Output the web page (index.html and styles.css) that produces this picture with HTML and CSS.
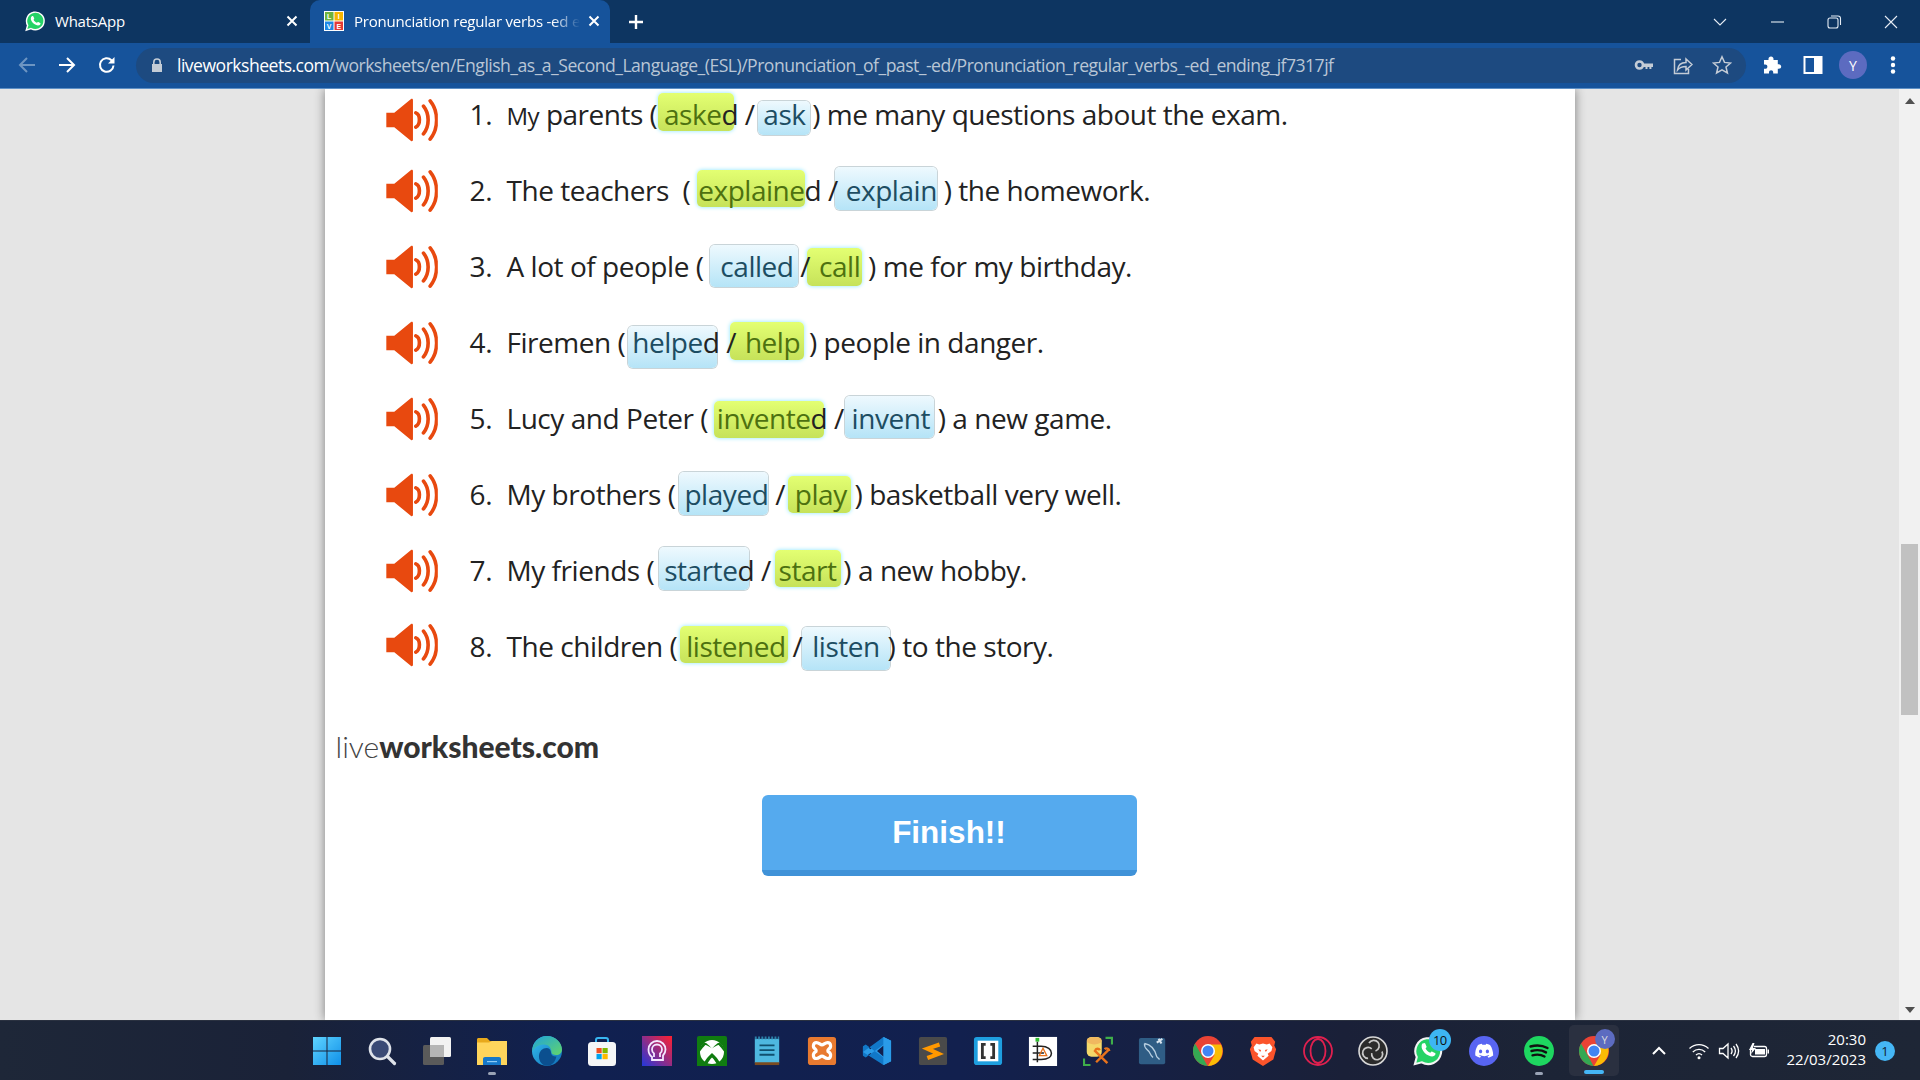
FILE: index.html
```html
<!DOCTYPE html>
<html lang="en">
<head>
<meta charset="utf-8">
<title>Pronunciation regular verbs -ed ending</title>
<link rel="stylesheet" href="styles.css">
</head>
<body>
<header class="titlebar">
  <div class="tab">
    <svg class="fav" viewBox="0 0 24 24"><path fill="#25d366" stroke="#fff" stroke-width="1.6" d="M2.5 22l1.5-5.3A9.6 9.6 0 1 1 7.6 20.3z"/><path fill="#fff" d="M8.6 6.8c.6-.5 1.3-.4 1.6.2l.9 2c.2.4 0 .8-.7 1.6.7 1.5 2 2.7 3.6 3.4.8-.9 1.2-1.1 1.6-.9l2 1c.5.3.6.9.2 1.5-1 1.6-2.8 1.6-5 .6-2.300-1-4-2.800-5-5-.6-1.700-.5-3.300.8-4.400z"/></svg>
    <span class="tab-title">WhatsApp</span>
    <svg class="tab-x" viewBox="0 0 12 12"><path d="M1.500 1.500l9 9M10.500 1.500l-9 9"/></svg>
  </div>
  <div class="tab active">
    <svg class="fav live" viewBox="0 0 20 20"><rect width="20" height="20" fill="#fff"/><rect x="1" y="1" width="8.500" height="8.500" fill="#6db33f"/><rect x="10.500" y="1" width="8.500" height="8.500" fill="#f7b500"/><rect x="1" y="10.500" width="8.500" height="8.500" fill="#1e88e5"/><rect x="10.500" y="10.500" width="8.500" height="8.500" fill="#e53935"/><text x="5.200" y="8.200" text-anchor="middle">L</text><text x="14.800" y="8.200" text-anchor="middle">I</text><text x="5.200" y="17.600" text-anchor="middle">V</text><text x="14.800" y="17.600" text-anchor="middle">E</text></svg>
    <span class="tab-title fade">Pronunciation regular verbs -ed e</span>
    <svg class="tab-x" viewBox="0 0 12 12"><path d="M1.500 1.500l9 9M10.500 1.500l-9 9"/></svg>
  </div>
  <svg class="newtab" viewBox="0 0 16 16"><path d="M8 1v14M1 8h14"/></svg>
  <div class="winctl">
    <svg class="wc" viewBox="0 0 16 16"><path d="M2 5l6 6 6-6"/></svg>
    <svg class="wc" viewBox="0 0 16 16"><path d="M2 8h13"/></svg>
    <svg class="wc" viewBox="0 0 16 16"><rect x="2" y="4" width="10" height="10" rx="2"/><path d="M5 2h7a2.500 2.500 0 0 1 2.500 2.500V11"/></svg>
    <svg class="wc" viewBox="0 0 16 16"><path d="M2 2l12 12M14 2L2 14"/></svg>
  </div>
</header>
<nav class="toolbar">
  <svg class="nav dim" viewBox="0 0 20 20"><path d="M18 10H3M10 3l-7 7 7 7"/></svg>
  <svg class="nav" viewBox="0 0 20 20"><path d="M2 10h15M10 3l7 7-7 7"/></svg>
  <svg class="nav" viewBox="0 0 20 20"><path d="M16.500 10.500a6.800 6.800 0 1 1-2-5.300L16.500 7"/><path class="solid" d="M17.500 2v6.500H11z"/></svg>
  <div class="omnibox">
    <svg class="lock" viewBox="0 0 12 14"><path d="M2 6V4.200a4 4 0 0 1 8 0V6h1v8H1V6zm1.600 0h4.800V4.200a2.400 2.400 0 0 0-4.800 0z"/></svg>
    <div class="url"><b>liveworksheets.com</b>/worksheets/en/English_as_a_Second_Language_(ESL)/Pronunciation_of_past_-ed/Pronunciation_regular_verbs_-ed_ending_jf7317jf</div>
    <svg class="omni-ic" viewBox="0 0 20 20"><circle cx="5.500" cy="10" r="3.500" fill="none" stroke="#c4ccd6" stroke-width="2.600"/><path fill="#c4ccd6" d="M8 8.500h11v3.500h-1.600v2h-2v-2H13.500v2h-2v-2H8z"/></svg>
    <svg class="omni-ic line" viewBox="0 0 20 20"><path d="M8 4.500H1.500v14h14V14M4.500 15c.5-5 4-7.500 8.500-7.500V4l6 5.500-6 5.500v-3.500c-3.500 0-6.500 1-8.500 3.500z"/></svg>
    <svg class="omni-ic line" viewBox="0 0 20 20"><path stroke-width="1.800" d="M10 1.800l2.500 5.600 6.100.6-4.600 4 1.400 6-5.400-3.200-5.400 3.200 1.400-6-4.600-4 6.100-.6z"/></svg>
  </div>
  <div class="tool-right">
    <svg class="tool" viewBox="0 0 20 20"><path fill="#fff" d="M8 1.500c1.500 0 2.500 1 2.500 2.300V5h4.300v4.200h1c1.400 0 2.400 1 2.400 2.300s-1 2.300-2.400 2.300h-1v4.700h-4.600v-1.200c0-1.200-.9-2-2.100-2s-2.100.8-2.100 2v1.200H1V13.800h1.200c1.300 0 2.200-.9 2.200-2.100S3.500 9.600 2.200 9.600H1V5h4.500V3.800C5.500 2.500 6.500 1.500 8 1.500z"/></svg>
    <svg class="tool" viewBox="0 0 20 20"><rect x="1.500" y="2" width="17" height="16" fill="none" stroke="#fff" stroke-width="2"/><rect x="11" y="2" width="8" height="16" fill="#fff"/></svg>
    <div class="avatar">Y</div>
    <svg class="tool" viewBox="0 0 20 20"><circle cx="10" cy="3.500" r="2.200" fill="#fff"/><circle cx="10" cy="10" r="2.200" fill="#fff"/><circle cx="10" cy="16.500" r="2.200" fill="#fff"/></svg>
  </div>
</nav>
<div class="viewport">
  <main class="page">
    <section class="sheet">
      <ol class="list">
        <li class="row r1"><svg class="spk" viewBox="0 0 54 46"><use href="#speaker"/></svg><span class="num">1.</span><p class="sentence"><span class="my">My</span> parents ( <span class="chip g c-asked">aske</span>d <span class="sl">/</span> <span class="chip b c-ask">ask</span> ) me many questions about the exam.</p></li>
        <li class="row r2"><svg class="spk" viewBox="0 0 54 46"><use href="#speaker"/></svg><span class="num">2.</span><p class="sentence">The teachers &nbsp;( <span class="chip g c-explained">explaine</span>d <span class="sl">/</span> <span class="chip b c-explain">explain</span> ) the homework.</p></li>
        <li class="row r3"><svg class="spk" viewBox="0 0 54 46"><use href="#speaker"/></svg><span class="num">3.</span><p class="sentence">A lot of people ( <span class="chip b c-called">called</span> <span class="sl">/</span> <span class="chip g c-call">call</span> ) me for my birthday.</p></li>
        <li class="row r4"><svg class="spk" viewBox="0 0 54 46"><use href="#speaker"/></svg><span class="num">4.</span><p class="sentence">Firemen ( <span class="chip b c-helped">helpe</span>d <span class="sl">/</span> <span class="chip g c-help">help</span> ) people in danger.</p></li>
        <li class="row r5"><svg class="spk" viewBox="0 0 54 46"><use href="#speaker"/></svg><span class="num">5.</span><p class="sentence">Lucy and Peter ( <span class="chip g c-invented">invente</span>d <span class="sl">/</span> <span class="chip b c-invent">invent</span> ) a new game.</p></li>
        <li class="row r6"><svg class="spk" viewBox="0 0 54 46"><use href="#speaker"/></svg><span class="num">6.</span><p class="sentence">My brothers ( <span class="chip b c-played">played</span> <span class="sl">/</span> <span class="chip g c-play">play</span> ) basketball very well.</p></li>
        <li class="row r7"><svg class="spk" viewBox="0 0 54 46"><use href="#speaker"/></svg><span class="num">7.</span><p class="sentence">My friends ( <span class="chip b c-started">starte</span>d <span class="sl">/</span> <span class="chip g c-start">start</span> ) a new hobby.</p></li>
        <li class="row r8"><svg class="spk" viewBox="0 0 54 46"><use href="#speaker"/></svg><span class="num">8.</span><p class="sentence">The children ( <span class="chip g c-listened">listened</span> <span class="sl">/</span> <span class="chip b c-listen">listen</span> ) to the story.</p></li>
      </ol>
      <div class="logo">live<b>worksheets.com</b></div>
      <button class="finish">Finish!!</button>
    </section>
  </main>
  <aside class="scrollbar">
    <i class="arrow up"></i>
    <div class="track"><div class="thumb"></div></div>
    <i class="arrow down"></i>
  </aside>
</div>
<footer class="taskbar">
  <div class="apps">
    <div class="app"><svg viewBox="0 0 30 30"><defs><linearGradient id="win" x1="0" y1="0" x2="1" y2="1"><stop offset="0" stop-color="#5fd4ff"/><stop offset="1" stop-color="#0f8fe8"/></linearGradient></defs><path fill="url(#win)" d="M1 1h13.500v13.500H1zM15.500 1H29v13.500H15.500zM1 15.500h13.500V29H1zM15.500 15.500H29V29H15.500z"/></svg></div>
    <div class="app"><svg viewBox="0 0 30 30"><circle cx="13" cy="13" r="10" fill="#3a4a75" stroke="#dfe3ea" stroke-width="2.600"/><path d="M20.500 20.500l7 7" stroke="#dfe3ea" stroke-width="3.200" stroke-linecap="round"/></svg></div>
    <div class="app"><svg viewBox="0 0 30 30"><rect x="1" y="9" width="21" height="20" rx="1.500" fill="#5a5a5a"/><rect x="8" y="1" width="21" height="20" rx="1.500" fill="#f2f2f2"/><rect x="8" y="9" width="14" height="12" fill="#b5b5b5"/></svg></div>
    <div class="app dot"><svg viewBox="0 0 30 30"><path fill="#e8a91c" d="M0 3.500C0 2.500.8 2 1.500 2H10l3 3h17v6H0z"/><path fill="#ffd55c" d="M0 6.500h12l3-1.500h15v24H0z"/><path fill="#1678c9" d="M6 29v-6c0-1.200.8-2 2-2h14c1.200 0 2 .8 2 2v6z"/><path fill="#8ecbf5" d="M10 25h10v1.200H10z"/></svg></div>
    <div class="app"><svg viewBox="0 0 30 30"><defs><linearGradient id="edge" x1="0" y1="0" x2="1" y2="1"><stop offset="0" stop-color="#35c1f1"/><stop offset="1" stop-color="#0f6cb5"/></linearGradient><linearGradient id="edge2" x1="0" y1="0" x2="1" y2="1"><stop offset="0" stop-color="#1fa3dc"/><stop offset="1" stop-color="#62d56a"/></linearGradient></defs><circle cx="15" cy="15" r="15" fill="url(#edge)"/><path fill="url(#edge2)" d="M15 0c8.500 0 15 6.500 15 13.500 0 3.500-2.500 5.500-6 5.500-2.500 0-4.500-1-4.500-2.500 0-3-1.500-8-7.500-8C7 8.500 2.500 11 0.500 15.500 0 7 6.500 0 15 0z"/><path fill="#0b4f8f" d="M18 29.500c-6 1.500-11.500-3-11-10 .3-4.500 3.800-7.500 7.500-7.500 2.500 0 4.500 2 4.500 4.500 0 3 3 4.500 5.500 4-1 4.500-3.500 7.500-6.500 9z"/></svg></div>
    <div class="app"><svg viewBox="0 0 30 30"><path d="M9 7V4c0-1.500 1-2 2-2h8c1 0 2 .5 2 2v3" fill="none" stroke="#38b6f0" stroke-width="2"/><rect x="1" y="6" width="28" height="24" rx="3.500" fill="#f5f6f7"/><rect x="9.500" y="12" width="5.200" height="5.200" fill="#f25022"/><rect x="15.500" y="12" width="5.200" height="5.200" fill="#7fba00"/><rect x="9.500" y="18" width="5.200" height="5.200" fill="#00a4ef"/><rect x="15.500" y="18" width="5.200" height="5.200" fill="#ffb900"/></svg></div>
    <div class="app"><svg viewBox="0 0 30 30"><defs><linearGradient id="omg" x1="0" y1="1" x2="1" y2="0"><stop offset="0" stop-color="#1c39e0"/><stop offset="1" stop-color="#ff2030"/></linearGradient></defs><rect width="30" height="32" fill="url(#omg)"/><path fill="none" stroke="#f3e7ff" stroke-width="1.800" d="M10 24v-3c-3-2-3.500-5-3.500-7.500a8.500 8.500 0 0 1 17 0c0 3-1 4.500-2.500 6v4.500zM12 21v-3.500c-1.500-1-2-2.500-2-4a5 5 0 0 1 10 0c0 1.500-.5 3-2 4V21"/></svg></div>
    <div class="app"><svg viewBox="0 0 30 30"><rect width="30" height="32" rx="2" fill="#107c10"/><circle cx="15" cy="16" r="12" fill="#fff"/><path fill="#107c10" d="M15 12.500C12 9.500 9.500 6.500 7 6.500c-2.500 2-4.500 5-4.500 9.500 4-5 5.500-7 6-7 1 0 3.500 1.500 6.500 3.500zM15 12.500c3-3 5.500-6 8-6 2.500 2 4.500 5 4.500 9.500-4-5-5.500-7-6-7-1 0-3.500 1.500-6.500 3.500zM15 17c-3.500 3-7 7-8 10.500l3 1.500c1-3 3-5.500 5-7.500 2 2 4 4.500 5 7.500l3-1.500C22 24 18.500 20 15 17z"/></svg></div>
    <div class="app"><svg viewBox="0 0 30 32"><rect x="2" y="3" width="26" height="26" fill="#4eb8e0"/><path fill="#7a4a20" d="M2 28h26v3H2z"/><path d="M2 2h26" stroke="#2a7fa8" stroke-width="3" stroke-dasharray="2 1.500"/><path d="M7 10h16M7 15h16M7 20h16" stroke="#10506f" stroke-width="2"/></svg></div>
    <div class="app"><svg viewBox="0 0 30 32"><rect y="1" width="30" height="30" rx="3" fill="#e87a30"/><path fill="none" stroke="#fff" stroke-width="3.400" stroke-linejoin="round" d="M9 7c3 0 4 2.500 6 2.500S18 7 21 7c3.500 0 4.500 5 1 7 -1 .8-1 2.500 0 3 3.500 2 2.500 7-1 7-3 0-4-2.500-6-2.500S12 24 9 24c-3.500 0-4.500-5-1-7 1-.5 1-2.200 0-3-3.500-2-2.500-7 1-7z"/></svg></div>
    <div class="app"><svg viewBox="0 0 30 32"><path fill="#2a9be8" d="M22 1l8 4v22l-8 4-14-13-5 4-3-2v-8l3-2 5 4zm0 9l-7 6 7 6z"/><path fill="#1178c8" d="M22 1l-22 16v4l3 2 19-14zM0 11l3-2 19 14v8L0 17z"/><path fill="#2a9be8" d="M22 1l8 4v22l-8 4z"/></svg></div>
    <div class="app"><svg viewBox="0 0 30 32"><rect y="1" width="30" height="30" rx="2" fill="#4a4a4a"/><path fill="none" stroke="#ff9800" stroke-width="4.400" d="M22 9L9 13.500l12 5.500L9 23.500"/></svg></div>
    <div class="app"><svg viewBox="0 0 30 32"><rect y="1" width="30" height="30" rx="3" fill="#1e9fe0"/><rect x="4" y="5" width="22" height="22" fill="#fff"/><path fill="none" stroke="#333" stroke-width="3" d="M12.500 9H9v14h3.500M17.500 9H21v14h-3.500"/></svg></div>
    <div class="app"><svg viewBox="0 0 30 32"><rect y="1" width="30" height="31" fill="#fff"/><rect x="7" y="2" width="4" height="4" fill="#30c030"/><path d="M9 6v22M4 11h9c7 0 11 3.500 11 7.500S20 25 13 25H4M4 18h12" fill="none" stroke="#222" stroke-width="1.600"/><path d="M11 21l4-8 4 8z" fill="none" stroke="#e8731c" stroke-width="1.400"/></svg></div>
    <div class="app"><svg viewBox="0 0 30 32"><rect x="3" y="1" width="16" height="21" rx="5" fill="#f4d86a"/><ellipse cx="11" cy="5" rx="8" ry="4" fill="#f0b860"/><path d="M0 24v7h7M30 9V2h-7" fill="none" stroke="#3fae4a" stroke-width="2.500"/><path d="M11 15l14 14M27 14L13 28M12 15a3 3 0 0 1 5 0M27 16a3 3 0 0 0-5-2" fill="none" stroke="#e8731c" stroke-width="2.600"/></svg></div>
    <div class="app"><svg viewBox="0 0 30 32"><rect y="2" width="28" height="28" rx="2" fill="#2f5d85"/><path fill="none" stroke="#b8cfe0" stroke-width="1.400" d="M6 8c6 1 11 6 13 14l3 3M6 8c-1 5 3 6 5 9 1 2 2 4 4 6"/><path stroke="#d8e4ee" stroke-width="2.200" d="M19 7l6-4M21 3l3 5"/></svg></div>
    <div class="app"><svg viewBox="0 0 30 30"><use href="#chrome"/></svg></div>
    <div class="app"><svg viewBox="0 0 30 32"><path fill="#fb542b" d="M6 1h18l4 5-1 4 2 4-3 11-8 5-3 2-3-2-8-5L1 14l2-4-1-4z"/><path fill="#fff" d="M8 8l3 1 4-1 4 1 3-1 3 4-1 4-4 3 1 2-6 5-6-5 1-2-4-3-1-4z"/><path fill="#fb542b" d="M10 14l3 1-1 2zM20 14l-3 1 1 2zM13 21h4l-2 2z"/></svg></div>
    <div class="app"><svg viewBox="0 0 30 30"><circle cx="15" cy="15" r="14" fill="none" stroke="#e0204f" stroke-width="1.800"/><ellipse cx="15" cy="15" rx="7.500" ry="12" fill="none" stroke="#e0204f" stroke-width="1.800"/></svg></div>
    <div class="app"><svg viewBox="0 0 30 30"><circle cx="15" cy="15" r="14" fill="#2b2b2b" stroke="#d8d8d8" stroke-width="1.600"/><g fill="none" stroke="#c8c8c8" stroke-width="1.700"><path d="M11 7a5.500 5.500 0 1 1 6.500 8"/><path d="M11 7a5.500 5.500 0 1 1 6.500 8" transform="rotate(120 15 15)"/><path d="M11 7a5.500 5.500 0 1 1 6.500 8" transform="rotate(240 15 15)"/></g></svg></div>
    <div class="app"><svg viewBox="0 0 32 32"><path fill="#25d366" stroke="#f4f4f4" stroke-width="2.200" d="M2 30l2-7.500A13.800 13.800 0 1 1 9.200 28z"/><path fill="#fff" d="M11 8c.8-.7 1.800-.5 2.200.3l1.200 2.800c.3.500 0 1-1 2.200 1 2 2.700 3.700 5 4.600 1.100-1.200 1.700-1.500 2.200-1.200l2.800 1.400c.7.400.8 1.200.3 2-1.400 2.200-3.900 2.200-7 .8-3.200-1.400-5.600-3.900-7-7-.8-2.300-.7-4.500.3-5.900z"/></svg><span class="badge">10</span></div>
    <div class="app"><svg viewBox="0 0 30 30"><circle cx="15" cy="15" r="15" fill="#5865f2"/><path fill="#fff" d="M21 9a16 16 0 0 0-3.800-1.200l-.5 1a13 13 0 0 0-3.400 0l-.5-1A16 16 0 0 0 9 9c-2.400 3.600-3 7-2.700 10.500A15 15 0 0 0 11 21.800l1-1.500-1.800-.9.400-.3c3 1.400 6.300 1.400 9.300 0l.4.3-1.800.9 1 1.500a15 15 0 0 0 4.700-2.300C24.100 15.500 23.200 12 21 9zM11.600 17.300c-.9 0-1.600-.8-1.600-1.900s.7-1.900 1.600-1.900 1.600.9 1.600 1.900-.7 1.900-1.600 1.900zm6.800 0c-.9 0-1.600-.8-1.600-1.900s.7-1.900 1.600-1.900 1.600.9 1.600 1.900-.7 1.900-1.600 1.900z"/></svg></div>
    <div class="app dot"><svg viewBox="0 0 30 30"><circle cx="15" cy="15" r="15" fill="#1ed760"/><path d="M6.500 10.500c5.500-1.600 12-1.200 17 1.500M7.500 15c4.800-1.300 10.300-1 14.500 1.400M8.500 19.300c4-1 8.500-.8 12 1.200" fill="none" stroke="#111" stroke-width="2.400" stroke-linecap="round"/></svg></div>
    <div class="app current"><svg viewBox="0 0 30 30"><use href="#chrome"/></svg><span class="mini">Y</span></div>
  </div>
  <div class="tray">
    <svg class="tr chev" viewBox="0 0 16 10"><path d="M2 8l6-6 6 6"/></svg>
    <svg class="tr" viewBox="0 0 22 18"><path d="M1.500 6.500c5.500-5.200 13.500-5.200 19 0M4.800 10c3.600-3.400 8.800-3.400 12.400 0M8 13c1.700-1.600 4.300-1.600 6 0"/><circle class="fill" cx="11" cy="15.800" r="1.500"/></svg>
    <svg class="tr" viewBox="0 0 22 18"><path d="M1.500 6.500h3.500L10 2v14l-5-4.500H1.500zM13 6c1.300 1.800 1.300 4.200 0 6M15.500 4c2.300 3 2.300 7 0 10M18 2c3.200 4.300 3.200 9.700 0 14"/></svg>
    <svg class="tr" viewBox="0 0 22 18"><path d="M6 4.500h10.500a2 2 0 0 1 2 2v6a2 2 0 0 1-2 2h-12a2 2 0 0 1-2-2V7"/><path class="fill" d="M7 7h10v5.500H7zM19.500 7.500h1.500v4h-1.500zM4.500 1L1 8h3l-1 4 5-6H5l1.500-5z"/></svg>
    <div class="clock"><span>20:30</span><span>22/03/2023</span></div>
    <span class="notify">1</span>
  </div>
</footer>
<svg class="defs" width="0" height="0" aria-hidden="true">
  <symbol id="speaker" viewBox="0 0 54 46">
    <path fill="#e8490f" d="M0 15.500h8.500L26 1c1-.5 2 0 2 1v42c0 1-1 1.500-2 1L8.500 30.500H0z"/>
    <path fill="none" stroke="#e8490f" stroke-width="3.800" stroke-linecap="round" d="M31 15.500c5 2 5 12.500 0 15M39 8.500c6.500 8 6.500 21 0 29M46 3c9 11 9 29 0 40"/>
  </symbol>
  <symbol id="chrome" viewBox="0 0 30 30">
    <circle cx="15" cy="15" r="15" fill="#ea4335"/>
    <path fill="#34a853" d="M2 7.500L8.500 19l6 11A15 15 0 0 1 2 7.500z"/>
    <path fill="#fbbc05" d="M15 30l6.500-11L15 8.500h13A15 15 0 0 1 15 30z"/>
    <circle cx="15" cy="15" r="7" fill="#fff"/>
    <circle cx="15" cy="15" r="5.500" fill="#4285f4"/>
  </symbol>
</svg>
</body>
</html>
```
FILE: styles.css
```css
* { box-sizing: border-box; }
html, body { margin: 0; height: 100%; }
body {
  display: flex; flex-direction: column; height: 100vh; overflow: hidden;
  font-family: "Open Sans", "Noto Sans", sans-serif; color: #222; background: #e5e5e5;
}
svg { display: block; flex: none; }
.defs { position: absolute; }

/* window title bar */
.titlebar { height: 43px; flex: none; display: flex; align-items: flex-end; background: #0d3561; padding-left: 10px; color: #fff; }
.tab { width: 300px; height: 43px; display: flex; align-items: center; padding: 0 12px 2px 14px; border-radius: 10px 10px 0 0; font-size: 15px; }
.tab.active { background: #16539b; padding-left: 14px; padding-right: 17px; }
.fav { width: 22px; height: 22px; margin-right: 9px; }
.live { width: 20px; height: 20px; margin-right: 10px; }
.live text { font: 700 7px "Liberation Sans", sans-serif; fill: #fff; }
.tab-title { flex: 1; white-space: nowrap; letter-spacing: -.22px; }
.fade { -webkit-mask-image: linear-gradient(90deg, #000 88%, transparent 100%); mask-image: linear-gradient(90deg, #000 88%, transparent 100%); }
.tab-x { width: 12px; height: 12px; margin-left: 8px; }
.tab-x path { stroke: #fff; stroke-width: 2; fill: none; }
.newtab { width: 16px; height: 16px; margin: 0 0 13px 18px; align-self: flex-end; }
.newtab path { stroke: #fff; stroke-width: 2.400; fill: none; }
.winctl { margin-left: auto; height: 43px; display: flex; align-items: center; gap: 41px; padding-right: 21px; }
.wc { width: 16px; height: 16px; }
.wc path, .wc rect { fill: none; stroke: #e6edf5; stroke-width: 1.100; }

/* toolbar */
.toolbar { height: 46px; flex: none; display: flex; align-items: center; background: #16539b; border-bottom: 1px solid #5e90c6; padding: 0 0 1px 17px; }
.nav { width: 20px; height: 20px; margin-right: 20px; }
.nav path { fill: none; stroke: #fff; stroke-width: 2; }
.nav path.solid { fill: #fff; stroke: none; }
.nav.dim path { stroke: #6d95c2; }
.omnibox { width: 1610px; height: 35px; margin-left: -1px; display: flex; align-items: center; background: #1d4a80; border-radius: 18px; padding: 0 14px 0 15px; color: #fff; }
.lock { width: 12px; height: 14px; margin-right: 14px; }
.lock path { fill: #c4ccd6; fill-rule: evenodd; }
.url { flex: 1; white-space: nowrap; overflow: hidden; font-size: 17.600px; letter-spacing: -.52px; color: #b9c6d6; }
.url b { font-weight: 400; color: #fff; }
.omni-ic { width: 20px; height: 20px; margin-left: 19px; }
.omni-ic.line path { fill: none; stroke: #c4ccd6; stroke-width: 1.500; }
.tool-right { display: flex; align-items: center; gap: 20px; margin-left: 17px; }
.tool { width: 20px; height: 20px; }
.avatar { width: 28px; height: 28px; border-radius: 50%; background: #5c6bc0; color: #fff; font-size: 14px; display: flex; align-items: center; justify-content: center; margin: 0 -4px; }

/* page */
.viewport { flex: 1; min-height: 0; display: flex; }
.page { flex: 1; display: flex; justify-content: center; background: #e5e5e5; overflow: hidden; }
.sheet { width: 1250px; background: #fff; box-shadow: 0 0 10px rgba(0,0,0,.45); display: flex; flex-direction: column; }
.list { list-style: none; margin: -12px 0 0; padding: 0 0 0 60px; display: flex; flex-direction: column; }
.row { height: 76px; display: flex; align-items: center; font-size: 28px; color: #222; }
.spk { width: 54px; height: 44px; margin-right: 31px; }
.r1 .spk { margin-top: 10px; }
.r8 .spk { margin-top: -4px; }
.num { width: 37px; letter-spacing: -.3px; margin-bottom: 2px; }
.sentence { margin: 0 0 2px; white-space: nowrap; letter-spacing: -.46px; }
.r1 .sentence { letter-spacing: -.5px; }
.my { font-size: 24px; }
.sl { position: relative; }

/* answer chips: boxes laid behind the words, each with its own overhang */
.chip {
  --t: 9px; --b: 9px; --l: 4px; --r: 4px; --g: 0px; --a: 0px;
  display: inline-block; line-height: 20px; border-radius: 5px;
  padding: calc(var(--t) + 1px) var(--r) calc(var(--b) - 1px) var(--l);
  margin: calc(-1px - var(--t)) calc(var(--a) - var(--r)) calc(1px - var(--b)) calc(var(--g) - var(--l));
}
.chip.g { background: linear-gradient(#e3ff72, #c6e25a); box-shadow: 0 0 4px #8be6ff; color: #4d7110; }
.chip.b { background: linear-gradient(#eef9fe, #b5e4f7); box-shadow: 0 0 0 1px #c9d4d8; color: #1d4d62; }
.c-asked    { --t: 10px; --b: 8px;  --l: 6px;  --r: 13px; }
.c-ask      { --t: 2px;  --b: 12px; --l: 5px;  --r: 5px;  --g: 2px; }
.c-explained{ --t: 9px;  --b: 8px;  --l: 1px;  --r: 0px;  --g: 1px; }
.c-explain  { --t: 12px; --b: 11px; --l: 11px; --r: 0px;  --g: 1px; }
.c-called   { --t: 10px; --b: 12px; --l: 10px; --r: 4px;  --g: 10px; }
.c-call     { --t: 7px;  --b: 11px; --l: 12px; --r: 2px;  --g: 2px; --a: 1px; }
.c-helped   { --t: 5px;  --b: 17px; --l: 4px;  --r: 14px; }
.c-help     { --t: 9px;  --b: 9px;  --l: 15px; --r: 4px;  --g: 2px; --a: 2px; }
.c-invented { --t: 6px;  --b: 11px; --l: 3px;  --r: 14px; --g: 2px; }
.c-invent   { --t: 11px; --b: 11px; --l: 7px;  --r: 4px;  --g: 1px; --a: 1px; }
.c-played   { --t: 11px; --b: 12px; --l: 5px;  --r: 0px;  --g: 2px; }
.c-play     { --t: 7px;  --b: 10px; --l: 7px;  --r: 4px;  --g: 3px; --a: 1px; }
.c-started  { --t: 12px; --b: 11px; --l: 5px;  --r: 12px; --g: 3px; }
.c-start    { --t: 9px;  --b: 8px;  --l: 4px;  --r: 4px;  --g: 1px; }
.c-listened { --t: 9px;  --b: 8px;  --l: 6px;  --r: 2px;  --g: 2px; }
.c-listen   { --t: 8px;  --b: 15px; --l: 10px; --r: 10px; --g: 3px; --a: 1px; }

.logo { margin: 43px 0 0 11px; font: 300 30px/36px Lato, sans-serif; color: #444; }
.logo b { font-weight: 900; color: #333; }
.finish { align-self: flex-start; margin: 31px 0 0 437px; width: 375px; height: 81px; border: 0; border-bottom: 6px solid #3f92d8; border-radius: 6px; background: #55aaee; color: #fff; font: 700 31.500px "Liberation Sans", sans-serif; padding: 0; }

/* scrollbar */
.scrollbar { width: 21px; flex: none; background: #f1f1f1; display: flex; flex-direction: column; align-items: center; }
.arrow { flex: none; height: 0; width: 0; border-left: 5px solid transparent; border-right: 5px solid transparent; }
.arrow.up { border-bottom: 6px solid #505050; margin: 9px 0 6px; }
.arrow.down { border-top: 6px solid #505050; margin: 6px 0 7px; }
.track { flex: 1; width: 100%; padding-top: 434px; }
.thumb { height: 171px; margin: 0 2px; background: #c1c1c1; }

/* taskbar */
.taskbar { height: 60px; flex: none; display: flex; align-items: center; background: linear-gradient(90deg, #1e2738 0, #1a2238 15%, #102050 30%, #12204e 50%, #1a2038 70%, #1c2436 80%, #1e2636 100%); border-top: 1px solid #2a3140; padding-left: 299px; color: #fff; }
.apps { display: flex; width: 1324px; height: 59px; }
.app { width: 55.100px; height: 59px; flex: none; position: relative; display: flex; align-items: center; justify-content: center; }
.app > svg { width: 30px; height: 30px; }
.app.dot::after { content: ""; position: absolute; left: 24px; bottom: 5px; width: 8px; height: 3px; border-radius: 2px; background: #9aa3b5; }
.badge { position: absolute; left: 28px; top: 8px; width: 22px; height: 22px; border-radius: 50%; background: #3db6f2; color: #111; font-size: 13px; display: flex; align-items: center; justify-content: center; letter-spacing: -.5px; }
.current { background: #2a3040; border-radius: 5px; margin: 4px 2.500px; width: 50px; height: 51px; }
.current::after { content: ""; position: absolute; left: 15px; bottom: 2px; width: 20px; height: 4px; border-radius: 2px; background: #45b6f5; }
.mini { position: absolute; left: 26px; top: 4px; width: 20px; height: 20px; border-radius: 50%; background: #5c6bc0; color: #ddd; font-size: 11px; display: flex; align-items: center; justify-content: center; }
.tray { display: flex; align-items: center; margin-left: 28px; }
.tr { width: 22px; height: 18px; margin-right: 8px; }
.tr path { fill: none; stroke: #fff; stroke-width: 1.300; }
.tr .fill { fill: #fff; stroke: none; }
.chev { width: 16px; height: 10px; margin-right: 21px; }
.chev path { stroke-width: 2; }
.clock { width: 92px; display: flex; flex-direction: column; align-items: flex-end; font-size: 15px; line-height: 20px; margin: -4px 0 0 -4px; }
.notify { width: 20px; height: 20px; border-radius: 50%; background: #45b6f5; color: #123; font-size: 13px; display: flex; align-items: center; justify-content: center; margin-left: 9px; }
```
